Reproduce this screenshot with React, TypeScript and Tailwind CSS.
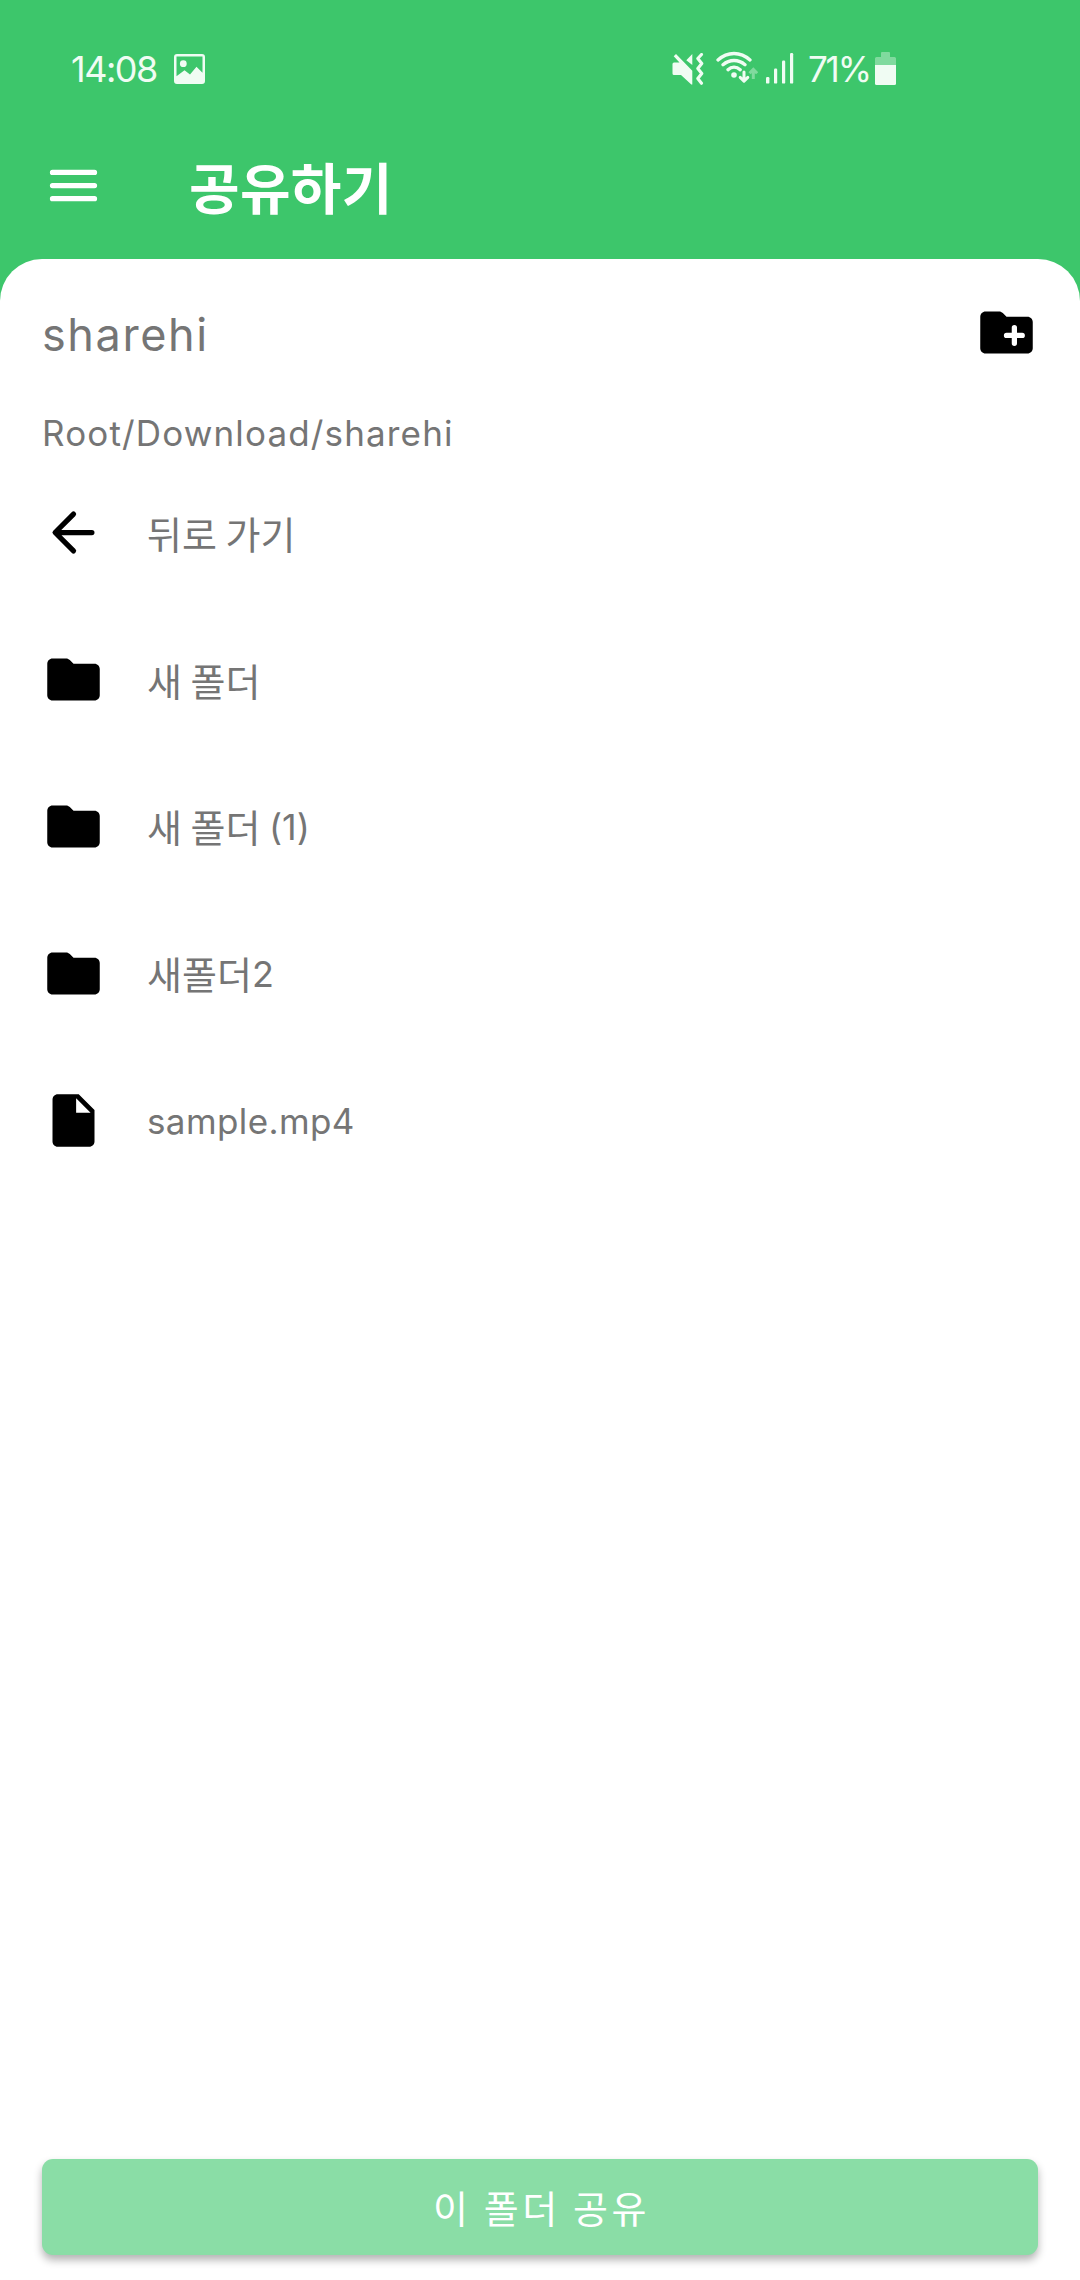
import React from 'react';

const FOLDER =
  'M10.59 4.59C10.21 4.21 9.7 4 9.17 4H4c-1.1 0-1.99.9-1.99 2L2 18c0 1.1.9 2 2 2h16c1.1 0 2-.9 2-2V8c0-1.1-.9-2-2-2h-8l-1.41-1.41z';

function FolderIcon() {
  return (
    <svg viewBox="0 0 24 24" className="size-[63px] fill-black">
      <path d={FOLDER} />
    </svg>
  );
}

function FolderPlusIcon() {
  return (
    <svg viewBox="0 0 24 24" className="size-[63px] fill-black">
      <path d={FOLDER} />
      <path d="M15 10v6M12 13h6" transform="translate(0 .1)" stroke="white" strokeWidth="2" strokeLinecap="round" />
    </svg>
  );
}

function FileIcon() {
  return (
    <svg viewBox="0 0 24 24" className="size-[63px] fill-black">
      <path d="M6 2c-1.1 0-1.99.9-1.99 2L4 20c0 1.100.89 2 1.990 2H18c1.100 0 2-.9 2-2V8l-6-6H6zm7 7V3.500L18.500 9H13z" />
    </svg>
  );
}

function BackIcon() {
  return (
    <svg viewBox="0 0 24 24" className="size-[63px] fill-none stroke-black" strokeWidth="2" strokeLinecap="round" strokeLinejoin="round">
      <path d="M19 12H5.4M12 5l-7 7 7 7" />
    </svg>
  );
}

function MenuIcon() {
  return (
    <svg viewBox="0 0 24 24" className="size-[63px] fill-none stroke-white" strokeWidth="2" strokeLinecap="round">
      <path d="M4 7h16M4 12h16M4 17h16" />
    </svg>
  );
}

function PictureIcon() {
  return (
    <svg viewBox="0 0 31 30" className="h-[30px] w-[31px]">
      <path
        fillRule="evenodd"
        d="M3 0h25a3 3 0 0 1 3 3v24a3 3 0 0 1-3 3H3a3 3 0 0 1-3-3V3a3 3 0 0 1 3-3zM2.5 2.5v19.8l8-6.1 5.5 4.4 6.5-7.8 6 6V2.5z"
      />
      <circle cx="9.3" cy="9.7" r="3.4" />
    </svg>
  );
}

function MuteVibrateIcon() {
  return (
    <svg viewBox="0 0 32 32" className="h-8 w-8">
      <path d="M2 9.500h5.500L1.700 3.200 4 .9 20.300 17.800V31.500h-1L9 22H2a1.500 1.500 0 0 1-1.500-1.500v-9.500A1.500 1.500 0 0 1 2 9.500zM14.300 7.300 20.300 1v11z" />
      <path d="M29.500 1.500l-3.700 4 4 5-4 5 4 5-4 5 3.700 4.800" fill="none" stroke="currentColor" strokeWidth="3.1" strokeLinejoin="round" strokeLinecap="round" />
    </svg>
  );
}

function WifiIcon() {
  return (
    <svg viewBox="0 0 42 34" className="h-[34px] w-[42px]">
      <g fill="none" stroke="currentColor" strokeWidth="3.300" strokeLinecap="round">
        <path d="M2 10C11.500 1.300 24.500 1.300 34 10M7 14.700c6.500-5.600 15.500-5.600 22 0M12 19.700c3.500-3.300 8.500-3.300 12.200 0" />
      </g>
      <circle cx="18" cy="25" r="2.800" />
      <path d="M28 22v8.500M24.200 27.400l3.800 3.800 3.800-3.800" fill="none" stroke="currentColor" strokeWidth="3" strokeLinecap="round" strokeLinejoin="round" />
      <path d="M37.300 29v-9M33.500 23.300l3.800-3.900 3.800 3.900" opacity=".38" fill="none" stroke="currentColor" strokeWidth="3" />
    </svg>
  );
}

function SignalIcon() {
  return (
    <svg viewBox="0 0 28 31" className="h-[31px] w-7">
      <rect x="0" y="24" width="3.4" height="6.6" rx="1.2" />
      <rect x="8" y="15.5" width="3.2" height="15.1" rx="1.2" />
      <rect x="16" y="7.5" width="3.2" height="23.1" rx="1.2" />
      <rect x="24" y="0" width="3.2" height="30.6" rx="1.2" />
    </svg>
  );
}

function BatteryIcon() {
  return (
    <svg viewBox="0 0 21 33" className="h-[33px] w-[21px]">
      <path opacity=".38" d="M7 0h7a1 1 0 0 1 1 1v4h4.5A1.5 1.5 0 0 1 21 6.5V13H0V6.5A1.5 1.5 0 0 1 1.5 5H6V1a1 1 0 0 1 1-1z" />
      <path d="M0 13h21v18.5a1.5 1.5 0 0 1-1.5 1.5h-18A1.5 1.5 0 0 1 0 31.5z" />
    </svg>
  );
}

const LATIN = "font-['Inter','Noto_Sans_CJK_KR',sans-serif]";
const KOREAN = "font-['Noto_Sans_CJK_KR',sans-serif]";

const rows: { icon: React.ReactNode; name: string; suffix?: string; latin?: boolean }[] = [
  { icon: <BackIcon />, name: '뒤로 가기' },
  { icon: <FolderIcon />, name: '새 폴더' },
  { icon: <FolderIcon />, name: '새 폴더 ', suffix: '(1)' },
  { icon: <FolderIcon />, name: '새폴더', suffix: '2' },
  { icon: <FileIcon />, name: 'sample.mp4', latin: true },
];

function StatusBar() {
  return (
    <div className={`flex h-[137px] items-center justify-between pr-[184px] pl-[71px] fill-current text-[#f0fcf3] ${LATIN}`}>
      <div className="flex items-center">
        <span className="w-[103px] text-[36px] leading-none tracking-[-1.5px]">14:08</span>
        <PictureIcon />
      </div>
      <div className="flex items-center">
        <MuteVibrateIcon />
        <span className="-mt-1 ml-3"><WifiIcon /></span>
        <span className="ml-2"><SignalIcon /></span>
        <span className="ml-[14px] w-[67px] pt-0.5 text-[35px] leading-none tracking-[-2.2px]">71%</span>
        <BatteryIcon />
      </div>
    </div>
  );
}

export default function App() {
  return (
    <div className="flex h-[2280px] w-[1080px] flex-col bg-[#3dc66b]">
      <header className="flex h-[259px] shrink-0 flex-col">
        <StatusBar />
        <div className="flex h-[97px] items-center pl-[42px] text-white">
          <MenuIcon />
          <h1 className={`ml-[84px] text-[55px] leading-none font-bold tracking-[.3px] ${KOREAN}`}>공유하기</h1>
        </div>
      </header>
      <main className="flex grow flex-col rounded-t-[42px] bg-white px-[42px] pt-[42px] pb-[25px] text-[#757575]">
        <div className="flex h-[63px] items-center justify-between">
          <h2 className={`mt-1 text-[45px] leading-none tracking-[1.6px] ${LATIN}`}>sharehi</h2>
          <FolderPlusIcon />
        </div>
        <p className={`mt-12 h-[43px] text-[35px] leading-[42px] tracking-[1.15px] ${LATIN}`}>
          Root/Download/sharehi
        </p>
        <ul className="mt-1">
          {rows.map((row) => (
            <li key={row.name + (row.suffix ?? '')} className="flex h-[147px] items-center">
              {row.icon}
              {row.latin ? (
                <span className={`ml-[42px] pt-0.5 text-[35px] leading-none tracking-[.4px] ${LATIN}`}>{row.name}</span>
              ) : (
                <span className={`ml-[42px] text-[38px] leading-none whitespace-pre ${KOREAN}`}>
                  {row.name}
                  {row.suffix && <span className={`relative -top-0.5 text-[36px] ${LATIN}`}>{row.suffix}</span>}
                </span>
              )}
            </li>
          ))}
        </ul>
        <button
          className={`mt-auto flex h-24 items-center justify-center rounded-[11px] bg-[#8adda6] pl-[3px] text-[38px] leading-none tracking-[3.6px] text-white shadow-[0_5px_8px_rgba(0,0,0,0.3)] ${KOREAN}`}
        >
          이 폴더 공유
        </button>
      </main>
    </div>
  );
}
